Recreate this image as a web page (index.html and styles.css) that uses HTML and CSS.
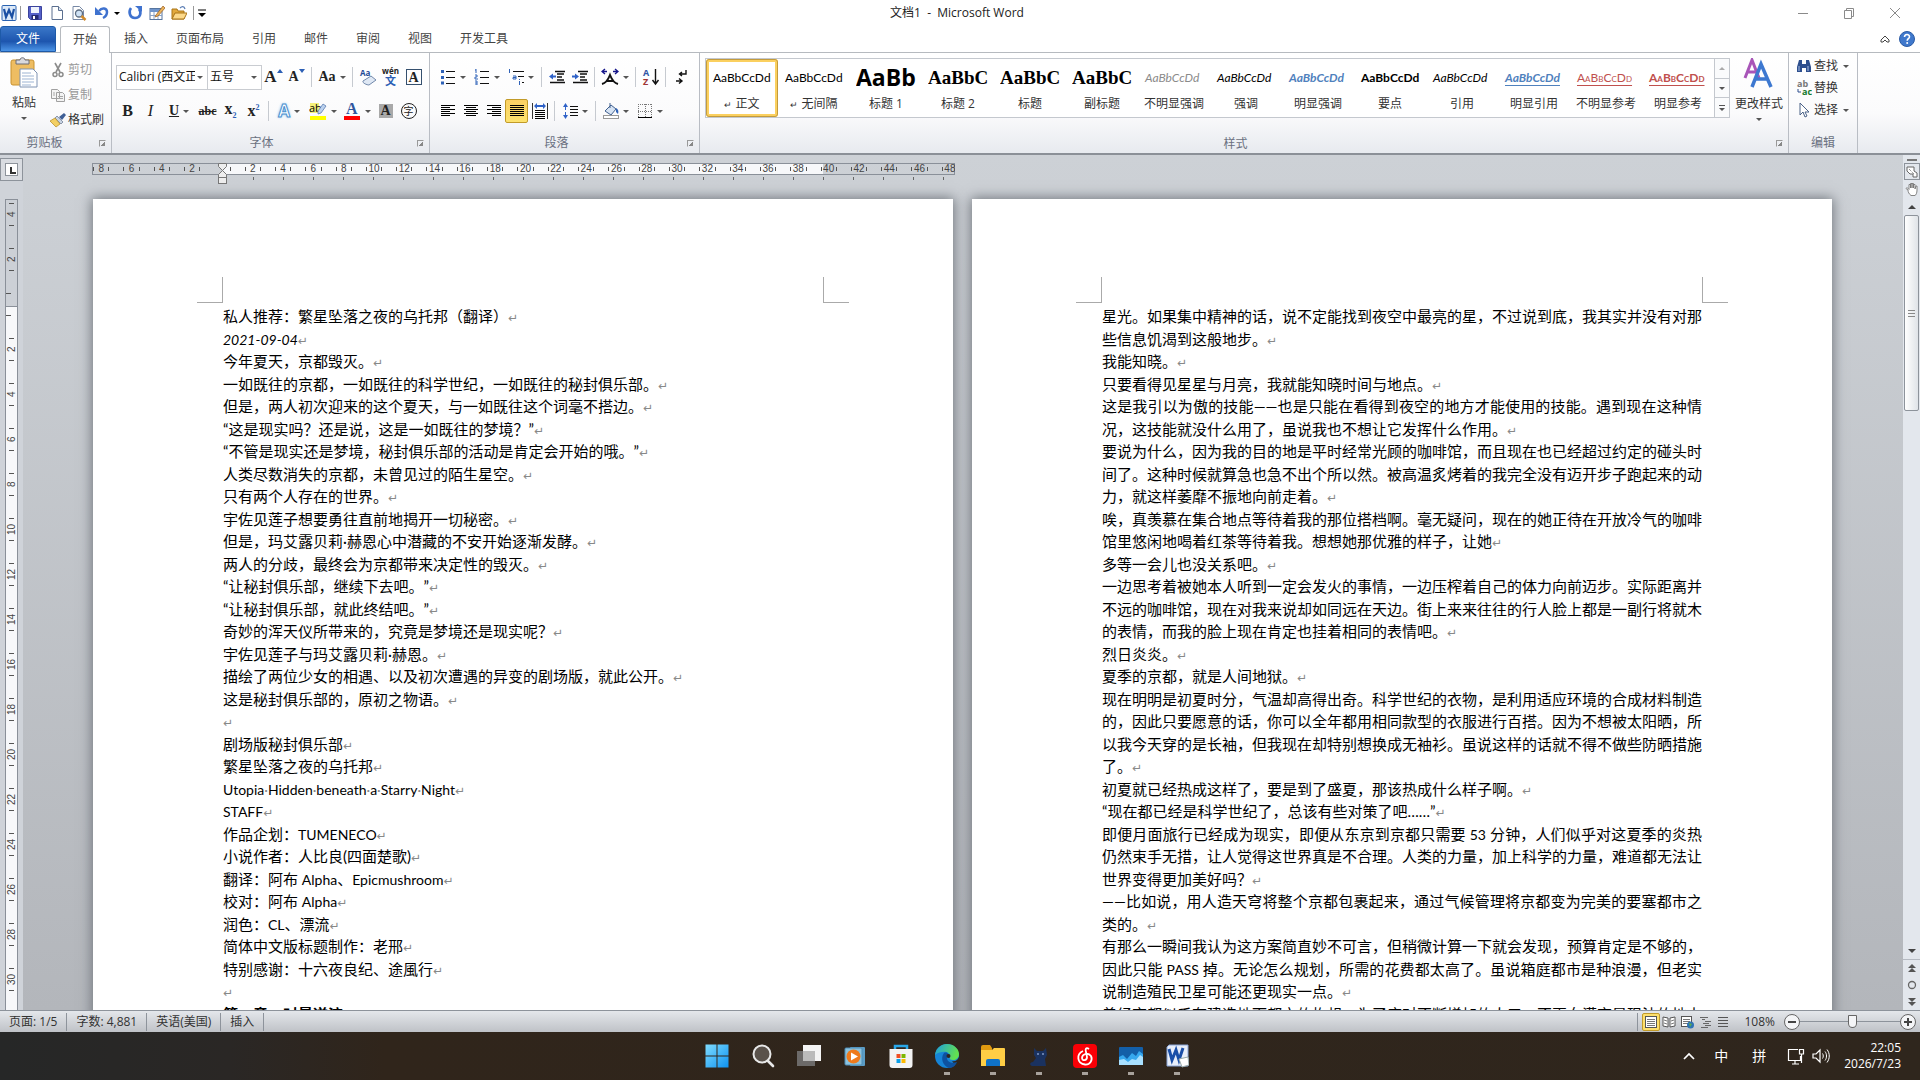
FILE: index.html
```html
<!DOCTYPE html>
<html lang="zh-CN">
<head>
<meta charset="utf-8">
<title>文档1 - Microsoft Word</title>
<link rel="stylesheet" href="styles.css">
</head>
<body>
<header class="titlebar">
  <div class="quick">
    <svg class="i16" viewBox="0 0 16 16"><rect x="1" y="0.500" width="14" height="15" rx="1" fill="#dce9f8" stroke="#2a62b0"/><path d="M3 4l2 8 3-7 3 7 2-8" fill="none" stroke="#1b4fa3" stroke-width="2.200"/></svg>
    <i class="qsep"></i>
    <button class="qb" aria-label="保存"><svg class="i16" viewBox="0 0 16 16"><path d="M1.500 1.500h13v13h-11l-2-2z" fill="#5560c8" stroke="#3b439c"/><rect x="4" y="2" width="8" height="6" fill="#eef2fc"/><rect x="4.500" y="10" width="7" height="4.500" fill="#23296f"/><rect x="6" y="11" width="2" height="3" fill="#fff"/></svg></button>
    <button class="qb" aria-label="新建"><svg class="i16" viewBox="0 0 16 16"><path d="M3 1.500h6.500l4 4v9H3z" fill="#fff" stroke="#5b6f8f"/><path d="M9.500 1.500v4h4" fill="#dbe5f2" stroke="#5b6f8f"/></svg></button>
    <button class="qb" aria-label="打印预览"><svg class="i16" viewBox="0 0 16 16"><path d="M2 1.500h6.500l4 4v9H2z" fill="#fff" stroke="#7788a5"/><circle cx="8" cy="8.500" r="3.500" fill="#cfe2f5" stroke="#5b6b80" stroke-width="1.300"/><path d="M10.500 11l4 4" stroke="#d08a2c" stroke-width="2.500"/></svg></button>
    <button class="qb arrow" aria-label="撤消"><svg class="i16" viewBox="0 0 16 16"><path d="M5 6c3-4 8-3 8 1 0 3-2 5-4 6" fill="none" stroke="#3f72cf" stroke-width="2.500"/><path d="M1 2v8h8z" fill="#3f72cf"/></svg></button>
    <button class="qb" aria-label="重复"><svg class="i16" viewBox="0 0 16 16"><path d="M4 3c-3 4-1 10 4 10s7-5 4-9" fill="none" stroke="#3f72cf" stroke-width="2.600"/><path d="M8 1h7v6z" fill="#3f72cf"/></svg></button>
    <button class="qb" aria-label="绘制表格"><svg class="i16" viewBox="0 0 16 16"><rect x="1" y="3.500" width="12" height="11" fill="#fff" stroke="#56759f"/><path d="M1 4h12v3H1z" fill="#6f95cc"/><path d="M1 10.500h12M5 7v7M9 7v7" stroke="#8aa3c5"/><path d="M7 10l7-9 2 2-7 8-3 1z" fill="#e9b25a" stroke="#9a5c20" stroke-width="0.700"/></svg></button>
    <button class="qb" aria-label="打开"><svg class="i16" viewBox="0 0 16 16"><path d="M1 14V4h5l1 2h6v8z" fill="#e2a93c" stroke="#a97416"/><path d="M1 14l3-6h12l-3 6z" fill="#fcd98a" stroke="#a97416"/><path d="M9 3c2-2 4-2 5 1" fill="none" stroke="#5d7fb5" stroke-width="1.300"/></svg></button>
    <i class="qsep"></i>
    <button class="qb cust" aria-label="自定义快速访问工具栏"><svg class="i10" viewBox="0 0 10 10"><path d="M1 2h8" stroke="#000"/><path d="M1 5h8L5 9z" fill="#000"/></svg></button>
  </div>
  <h1 class="title">文档1&nbsp; - &nbsp;Microsoft Word</h1>
  <div class="winctl">
    <button aria-label="最小化"><svg class="i12" viewBox="0 0 12 12"><path d="M1 6.500h10" stroke="#8a8a8a"/></svg></button>
    <button aria-label="还原"><svg class="i12" viewBox="0 0 12 12"><path d="M1.500 3.500h7v8h-7zM3.500 3V1.500h7v8H9" fill="none" stroke="#8a8a8a"/></svg></button>
    <button aria-label="关闭"><svg class="i12" viewBox="0 0 12 12"><path d="M1 1l10 10M11 1L1 11" stroke="#8a8a8a"/></svg></button>
  </div>
</header>
<nav class="tabs">
  <button class="file">文件</button><button class="on">开始</button><button>插入</button><button>页面布局</button><button>引用</button><button>邮件</button><button>审阅</button><button>视图</button><button>开发工具</button>
  <span class="grow"></span>
  <button class="tiny" aria-label="功能区最小化"><svg class="i10" viewBox="0 0 10 10"><path d="M1 6l4-4 4 4v2H7L5 6 3 8H1z" fill="#fff" stroke="#444"/></svg></button>
  <button class="tiny" aria-label="帮助"><svg class="i16" viewBox="0 0 16 16"><circle cx="8" cy="8" r="7.500" fill="#3f78cc" stroke="#2b5ba5"/><path d="M5.500 6c0-3.300 5-3.300 5-.3 0 2-2.300 2-2.300 4" fill="none" stroke="#fff" stroke-width="1.600"/><circle cx="8.200" cy="12" r="1" fill="#fff"/></svg></button>
</nav>
<section class="ribbon">
  <div class="group g-clip">
    <div class="clip">
      <button class="big"><svg class="i32" viewBox="0 0 32 32"><rect x="3" y="3" width="23" height="25" rx="2" fill="#eebd62" stroke="#c8922f"/><path d="M8 3h4c0-3 5-3 5 0h4v4H8z" fill="#d9d9de" stroke="#6d6d75"/><path d="M12 12h13l4 4v14H12z" fill="#fff" stroke="#7e93b3"/><path d="M14 16h9M14 19h12M14 22h12M14 25h12M14 28h9" stroke="#9db4d3"/></svg><span>粘贴</span></button>
      <div class="col">
        <button class="sm off"><svg class="i16" viewBox="0 0 16 16"><path d="M5 1l5 9M11 1L6 10" stroke="#8c8c8c" stroke-width="1.600"/><circle cx="5" cy="12.500" r="2" fill="none" stroke="#8c8c8c" stroke-width="1.500"/><circle cx="11" cy="12.500" r="2" fill="none" stroke="#8c8c8c" stroke-width="1.500"/></svg>剪切</button>
        <button class="sm off"><svg class="i16" viewBox="0 0 16 16"><path d="M1.500 2.500h6l2 2v7h-8zM6.500 5.500h6l2 2v7h-8z" fill="#f4f4f4" stroke="#a0a0a0"/><path d="M8 9.500h5M8 11.500h5M3 6h2M3 8h2" stroke="#a8a8a8"/></svg>复制</button>
        <button class="sm"><svg class="i16" viewBox="0 0 16 16"><path d="M9 5l5-4 2 2-4 5z" fill="#3f5f96"/><path d="M7 4l6 6-2 2-6-6z" fill="#c9d4e4" stroke="#66748c" stroke-width="0.700"/><path d="M5 6l5 6-4 3-6-6z" fill="#f3cf62" stroke="#b28a24" stroke-width="0.700"/></svg>格式刷</button>
      </div>
    </div>
    <footer><span>剪贴板</span><i class="launch"></i></footer>
  </div>
  <div class="group g-font">
    <div class="row">
      <label class="combo w1"><select aria-label="字体"><option>Calibri (西文正文)</option></select></label><label class="combo w2"><select aria-label="字号"><option>五号</option></select></label>
      <button class="ib"><b class="se f17">A</b><svg class="tri" viewBox="0 0 6 10"><path d="M0 4l3-4 3 4z" fill="#2c5fb5"/></svg></button>
      <button class="ib"><b class="se f14">A</b><svg class="tri" viewBox="0 0 6 10"><path d="M0 0h6L3 4z" fill="#2c5fb5"/></svg></button>
      <i class="sep"></i>
      <button class="ib dd"><b class="se f14">Aa</b></button>
      <i class="sep"></i>
      <button class="ib" aria-label="清除格式"><svg class="i18" viewBox="0 0 18 18"><text x="1" y="8" font-size="8" font-weight="700" fill="#1f4b96">Aa</text><path d="M4 13l8-5 5 4-7 5c-2 0-7-2-6-4z" fill="#dfe8f4" stroke="#7289ab"/></svg></button>
      <button class="ib phon"><small>wén</small><b>文</b></button>
      <button class="ib"><b class="se f14 boxed">A</b></button>
    </div>
    <div class="row">
      <button class="ib"><b class="se f16">B</b></button>
      <button class="ib"><i class="se f16">I</i></button>
      <button class="ib dd"><b class="se f14 un">U</b></button>
      <button class="ib"><s class="se f12 bold">abc</s></button>
      <button class="ib"><b class="se f16">x<sub>2</sub></b></button>
      <button class="ib"><b class="se f16">x<sup>2</sup></b></button>
      <i class="sep"></i>
      <button class="ib dd"><b class="glow">A</b></button>
      <button class="ib dd" aria-label="突出显示"><svg class="i18" viewBox="0 0 18 18"><rect x="1" y="1" width="9" height="10" fill="#f5f07a"/><text x="0" y="10" font-size="11" fill="#000">ab</text><path d="M9 9l5-7 3 2-5 7-3 1z" fill="#bcd2ee" stroke="#4a6ea8" stroke-width="0.700"/><rect x="1" y="14" width="16" height="4" fill="#ff0"/></svg></button>
      <button class="ib dd" aria-label="字体颜色"><svg class="i18" viewBox="0 0 18 18"><text class="se" x="3" y="12" font-size="16" font-weight="700" fill="#2f569e">A</text><rect x="1" y="14" width="16" height="4" fill="red"/></svg></button>
      <button class="ib"><b class="se f14 shade">A</b></button>
      <button class="ib"><span class="circ">字</span></button>
    </div>
    <footer><span>字体</span><i class="launch"></i></footer>
  </div>
  <div class="group g-para">
    <div class="row">
      <button class="ib dd" aria-label="项目符号"><svg class="i16" viewBox="0 0 16 16"><path d="M1 2.500h3M1 8.500h3M1 14h3" stroke="#2f62b8" stroke-width="3"/><path d="M6 2.500h9M6 8.500h9M6 14.500h9" stroke="#111"/></svg></button>
      <button class="ib dd" aria-label="编号"><svg class="i16" viewBox="0 0 16 16"><path d="M2 0v4M1 1h1M1 6h2v2H1v2h3M1 12h2v4H1M1 14h2" fill="none" stroke="#2f62b8"/><path d="M6 2.500h9M6 8.500h9M6 14.500h9" stroke="#111"/></svg></button>
      <button class="ib dd" aria-label="多级列表"><svg class="i16" viewBox="0 0 16 16"><path d="M1.500 0v4M5 7h3v3H5V8.500h3M11.500 10v1M11.500 12v4" fill="none" stroke="#2f62b8"/><path d="M5 2.500h11M10 7.500h6M14 13.500h2" stroke="#111"/></svg></button>
      <i class="sep"></i>
      <button class="ib" aria-label="减少缩进"><svg class="i16" viewBox="0 0 16 16"><path d="M6 2.500h10M8 5h7M8 8h5M8 11h7M1 13.500h15" stroke="#111" stroke-width="1.500"/><path d="M0 7.500l4-3v2h3v2H4v2z" fill="#2f62c8"/></svg></button>
      <button class="ib" aria-label="增加缩进"><svg class="i16" viewBox="0 0 16 16"><path d="M6 2.500h10M8 5h7M8 8h5M8 11h7M1 13.500h15" stroke="#111" stroke-width="1.500"/><path d="M7 7.500l-4-3v2H0v2h3v2z" fill="#2f62c8"/></svg></button>
      <i class="sep"></i>
      <button class="ib dd" aria-label="中文版式"><svg class="i18" viewBox="0 0 18 18"><path d="M1 16c4-1 6-4 8-9 2 5 4 8 8 9M6 13h6" fill="none" stroke="#111" stroke-width="2"/><path d="M1 3.500h5M4 1L1 3.500 4 6M12 3.500h5M14 1l3 2.500L14 6" fill="none" stroke="#16168a" stroke-width="1.400"/></svg></button>
      <i class="sep"></i>
      <button class="ib" aria-label="排序"><svg class="i18" viewBox="0 0 18 18"><text x="1" y="8" font-size="9" font-weight="700" fill="#2f55a4">A</text><text x="1" y="17" font-size="9" font-weight="700" fill="#a03535">Z</text><path d="M13.500 1v14M10.500 12l3 4 3-4" fill="none" stroke="#111" stroke-width="1.400"/></svg></button>
      <i class="sep"></i>
      <button class="ib" aria-label="显示编辑标记"><svg class="i16" viewBox="0 0 16 16"><path d="M13 1v4H7M9 3L6.500 5 9 7M3 12h6M6 9.500L9 12l-3 2.500" fill="none" stroke="#111" stroke-width="1.400"/></svg></button>
    </div>
    <div class="row">
      <button class="ib" aria-label="左对齐"><svg class="i16" viewBox="0 0 16 16"><path d="M1 2.500h14M1 4.500h9M1 6.500h14M1 8.500h9M1 10.500h14M1 12.500h9" stroke="#000"/></svg></button>
      <button class="ib" aria-label="居中"><svg class="i16" viewBox="0 0 16 16"><path d="M1 2.500h14M3 4.500h10M1 6.500h14M3 8.500h10M1 10.500h14M3 12.500h10" stroke="#000"/></svg></button>
      <button class="ib" aria-label="右对齐"><svg class="i16" viewBox="0 0 16 16"><path d="M1 2.500h14M6 4.500h9M1 6.500h14M6 8.500h9M1 10.500h14M6 12.500h9" stroke="#000"/></svg></button>
      <button class="ib hot" aria-label="两端对齐"><svg class="i16" viewBox="0 0 16 16"><path d="M1 2.500h14M1 4.500h14M1 6.500h14M1 8.500h14M1 10.500h14M1 12.500h14" stroke="#000"/></svg></button>
      <button class="ib" aria-label="分散对齐"><svg class="i16" viewBox="0 0 16 16"><path d="M.5 0v16M15.500 0v16" stroke="#333"/><path d="M3 7.500h10M3 9.500h10M3 11.500h10M3 13.500h10M3 15.500h10" stroke="#000"/><path d="M2 3l3-3v2h6V0l3 3-3 3V4H5v2z" fill="#2f62c8"/></svg></button>
      <i class="sep"></i>
      <button class="ib dd" aria-label="行距"><svg class="i16" viewBox="0 0 16 16"><path d="M3.500 2v5M3.500 9v5" stroke="#2f62c8"/><path d="M1 4l2.500-4L6 4zM1 12l2.500 4L6 12z" fill="#2f62c8"/><path d="M8 3.500h8M8 6.500h8M8 9.500h8M8 12.500h8" stroke="#111"/></svg></button>
      <i class="sep"></i>
      <button class="ib dd" aria-label="底纹"><svg class="i16" viewBox="0 0 16 16"><path d="M2 8l6-6 5 4-5 6z" fill="#d6e3f3" stroke="#41608f"/><path d="M7 0v5" stroke="#41608f"/><path d="M13 5c2 1 3 3 2 6l-2-2z" fill="#2f62b8"/><rect x=".5" y="12.500" width="15" height="3" fill="#fff" stroke="#999"/></svg></button>
      <button class="ib dd" aria-label="框线"><svg class="i16" viewBox="0 0 16 16"><path d="M1 1.500h14M1 8.500h14M1.500 1v13M8.500 1v13M14.500 1v13" stroke="#777" stroke-dasharray="1 1"/><path d="M1 14.500h14" stroke="#000"/></svg></button>
    </div>
    <footer><span>段落</span><i class="launch"></i></footer>
  </div>
  <div class="group g-style">
    <div class="styles">
      <div class="gallery">
        <button class="st sel"><span class="sm1">AaBbCcDd</span><em><small>↵</small> 正文</em></button>
        <button class="st"><span class="sm1">AaBbCcDd</span><em><small>↵</small> 无间隔</em></button>
        <button class="st"><span class="h1">AaBb</span><em>标题 1</em></button>
        <button class="st"><span class="h2">AaBbC</span><em>标题 2</em></button>
        <button class="st"><span class="h2">AaBbC</span><em>标题</em></button>
        <button class="st"><span class="h2">AaBbC</span><em>副标题</em></button>
        <button class="st"><span class="sm1 it gray">AaBbCcDd</span><em>不明显强调</em></button>
        <button class="st"><span class="sm1 it">AaBbCcDd</span><em>强调</em></button>
        <button class="st"><span class="sm1 it bd blue">AaBbCcDd</span><em>明显强调</em></button>
        <button class="st"><span class="sm1 bd">AaBbCcDd</span><em>要点</em></button>
        <button class="st"><span class="sm1 it">AaBbCcDd</span><em>引用</em></button>
        <button class="st"><span class="sm1 it bd blue ul">AaBbCcDd</span><em>明显引用</em></button>
        <button class="st"><span class="sm1 caps red ul">AaBbCcDd</span><em>不明显参考</em></button>
        <button class="st"><span class="sm1 caps bd red ul">AaBbCcDd</span><em>明显参考</em></button>
        <div class="gscroll"><button aria-label="上一行"><i class="up"></i></button><button aria-label="下一行"><i class="dn"></i></button><button aria-label="其他"><svg class="i10" viewBox="0 0 10 10"><path d="M2 2.500h6" stroke="#555"/><path d="M2 5h6L5 8z" fill="#555"/></svg></button></div>
      </div>
      <button class="big wide"><svg class="i32" viewBox="0 0 32 32"><path d="M2 20L9 2l7 18M4 14h10" fill="none" stroke="#a855b8" stroke-width="3"/><path d="M9 29l9-23 10 23M13 21h11" fill="none" stroke="#3d78d0" stroke-width="3.500"/></svg><span>更改样式</span></button>
    </div>
    <footer><span>样式</span><i class="launch"></i></footer>
  </div>
  <div class="group g-edit">
    <div class="col tight">
      <button class="sm arrow2"><svg class="i16" viewBox="0 0 16 16"><path d="M3 2h3v4h4V2h3l2 7v5h-5v-4H6v4H1V9z" fill="#2e4f8e"/><path d="M3 8v5M12 8v5" stroke="#a9c0e6"/></svg>查找</button>
      <button class="sm"><svg class="i16" viewBox="0 0 16 16"><text x="1" y="7" font-size="9" font-weight="700" fill="#777">ab</text><text x="6" y="15" font-size="9" font-weight="700" fill="#137a2c">ac</text><path d="M2 9v3h3" fill="none" stroke="#2e4f8e"/></svg>替换</button>
      <button class="sm arrow2"><svg class="i16" viewBox="0 0 16 16"><path d="M4 1v12l3-3 2 5 2-1-2-4h4z" fill="#fff" stroke="#4b6287"/></svg>选择</button>
    </div>
    <footer><span>编辑</span></footer>
  </div>
</section>
<main class="work">
  <aside class="left">
    <button class="tabsel" aria-label="制表符"><i></i></button>
    <div class="vruler"><div class="vtrack">
      <span>4</span><span>2</span><span></span><span>2</span><span>4</span><span>6</span><span>8</span><span>10</span><span>12</span><span>14</span><span>16</span><span>18</span><span>20</span><span>22</span><span>24</span><span>26</span><span>28</span><span>30</span>
    </div></div>
  </aside>
  <div class="desk">
    <div class="ruler"><div class="zone"></div><div class="track">
      <span>8</span><span>6</span><span>4</span><span>2</span><span class="mk"><svg viewBox="0 0 9 21"><path d="M.5.5h8v3l-4 4 4 4v3h-8v-3l4-4-4-4z" fill="#eee" stroke="#777"/><rect x=".5" y="14.500" width="8" height="6" fill="#eee" stroke="#777"/></svg></span><span>2</span><span>4</span><span>6</span><span>8</span><span>10</span><span>12</span><span>14</span><span>16</span><span>18</span><span>20</span><span>22</span><span>24</span><span>26</span><span>28</span><span>30</span><span>32</span><span>34</span><span>36</span><span>38</span><span>40</span><span>42</span><span>44</span><span>46</span><span>48</span>
    </div><div class="ticks"></div></div>
    <div class="pages">
      <article class="page">
        <div class="marks"><i></i><i></i></div>
        <p>私人推荐：繁星坠落之夜的乌托邦（翻译）</p>
        <p class="date"><span class="en">2021-09-04</span></p>
        <p>今年夏天，京都毁灭。</p>
        <p>一如既往的京都，一如既往的科学世纪，一如既往的秘封俱乐部。</p>
        <p>但是，两人初次迎来的这个夏天，与一如既往这个词毫不搭边。</p>
        <p>“这是现实吗？还是说，这是一如既往的梦境？”</p>
        <p>“不管是现实还是梦境，秘封俱乐部的活动是肯定会开始的哦。”</p>
        <p>人类尽数消失的京都，未曾见过的陌生星空。</p>
        <p>只有两个人存在的世界。</p>
        <p>宇佐见莲子想要勇往直前地揭开一切秘密。</p>
        <p>但是，玛艾露贝莉·赫恩心中潜藏的不安开始逐渐发酵。</p>
        <p>两人的分歧，最终会为京都带来决定性的毁灭。</p>
        <p>“让秘封俱乐部，继续下去吧。”</p>
        <p>“让秘封俱乐部，就此终结吧。”</p>
        <p>奇妙的浑天仪所带来的，究竟是梦境还是现实呢？</p>
        <p>宇佐见莲子与玛艾露贝莉·赫恩。</p>
        <p>描绘了两位少女的相遇、以及初次遭遇的异变的剧场版，就此公开。</p>
        <p>这是秘封俱乐部的，原初之物语。</p>
        <p></p>
        <p>剧场版秘封俱乐部</p>
        <p>繁星坠落之夜的乌托邦</p>
        <p><span class="en">Utopia<u>·</u>Hidden<u>·</u>beneath<u>·</u>a<u>·</u>Starry<u>·</u>Night</span></p>
        <p><span class="en">STAFF</span></p>
        <p>作品企划：<span class="en">TUMENECO</span></p>
        <p>小说作者：人比良(四面楚歌)</p>
        <p>翻译：阿布 <span class="en">Alpha</span>、<span class="en">Epicmushroom</span></p>
        <p>校对：阿布 <span class="en">Alpha</span></p>
        <p>润色：<span class="en">CL</span>、漂流</p>
        <p>简体中文版标题制作：老邢</p>
        <p>特别感谢：十六夜良纪、途風行</p>
        <p></p>
        <h2>第一章　时晷逆流</h2>
      </article>
      <article class="page">
        <div class="marks"><i></i><i></i></div>
        <p><span class="ln">星光。如果集中精神的话，说不定能找到夜空中最亮的星，不过说到底，我其实并没有对那</span>些信息饥渴到这般地步。</p>
        <p>我能知晓。</p>
        <p>只要看得见星星与月亮，我就能知晓时间与地点。</p>
        <p><span class="ln">这是我引以为傲的技能——也是只能在看得到夜空的地方才能使用的技能。遇到现在这种情</span>况，这技能就没什么用了，虽说我也不想让它发挥什么作用。</p>
        <p><span class="ln">要说为什么，因为我的目的地是平时经常光顾的咖啡馆，而且现在也已经超过约定的碰头时</span><span class="ln">间了。这种时候就算急也急不出个所以然。被高温炙烤着的我完全没有迈开步子跑起来的动</span>力，就这样萎靡不振地向前走着。</p>
        <p><span class="ln">唉，真羡慕在集合地点等待着我的那位搭档啊。毫无疑问，现在的她正待在开放冷气的咖啡</span>馆里悠闲地喝着红茶等待着我。想想她那优雅的样子，让她</p>
        <p>多等一会儿也没关系吧。</p>
        <p><span class="ln">一边思考着被她本人听到一定会发火的事情，一边压榨着自己的体力向前迈步。实际距离并</span><span class="ln">不远的咖啡馆，现在对我来说却如同远在天边。街上来来往往的行人脸上都是一副行将就木</span>的表情，而我的脸上现在肯定也挂着相同的表情吧。</p>
        <p>烈日炎炎。</p>
        <p>夏季的京都，就是人间地狱。</p>
        <p><span class="ln">现在明明是初夏时分，气温却高得出奇。科学世纪的衣物，是利用适应环境的合成材料制造</span><span class="ln">的，因此只要愿意的话，你可以全年都用相同款型的衣服进行百搭。因为不想被太阳晒，所</span><span class="ln">以我今天穿的是长袖，但我现在却特别想换成无袖衫。虽说这样的话就不得不做些防晒措施</span>了。</p>
        <p>初夏就已经热成这样了，要是到了盛夏，那该热成什么样子啊。</p>
        <p>“现在都已经是科学世纪了，总该有些对策了吧……”</p>
        <p><span class="ln">即便月面旅行已经成为现实，即便从东京到京都只需要 <span class="en">53</span> 分钟，人们似乎对这夏季的炎热</span><span class="ln">仍然束手无措，让人觉得这世界真是不合理。人类的力量，加上科学的力量，难道都无法让</span>世界变得更加美好吗？</p>
        <p><span class="ln">——比如说，用人造天穹将整个京都包裹起来，通过气候管理将京都变为完美的要塞都市之</span>类的。</p>
        <p><span class="ln">有那么一瞬间我认为这方案简直妙不可言，但稍微计算一下就会发现，预算肯定是不够的，</span><span class="ln">因此只能 <span class="en">PASS</span> 掉。无论怎么规划，所需的花费都太高了。虽说箱庭都市是种浪漫，但老实</span>说制造殖民卫星可能还更现实一点。</p>
        <p><span class="ln">曾经京都似乎有建造地下都市的构想，为了应对不断增加的人口，不再向满京是现法的地上</span></p>
      </article>
    </div>
  </div>
  <aside class="vscroll">
    <i class="split"></i>
    <button class="rt" aria-label="标尺"><svg class="i12" viewBox="0 0 12 12"><path d="M1 1h7v4l3 2v4H7V8H4L1 5z" fill="#fff" stroke="#666"/><path d="M3 3l5 5" stroke="#666" stroke-dasharray="1 1"/></svg></button>
    <button class="hand" aria-label="平移"><svg class="i14" viewBox="0 0 14 14"><path d="M3 8L1 6.500l1-1 2 2V2.500h1.500V6 1.500H7V6 1.500h1.500V6 2.500H10V7l1-3h1v4c0 3-1 5-2 5.500H6C4 12 3 10 3 8z" fill="#fff" stroke="#777" stroke-width="0.900"/></svg></button>
    <button class="arr" aria-label="向上滚动"><i class="up dark"></i></button>
    <div class="thumb"></div>
    <span class="grow"></span>
    <button class="arr" aria-label="向下滚动"><i class="dn dark"></i></button>
    <button class="arr top" aria-label="前一页"><svg class="i10" viewBox="0 0 10 10"><path d="M1 5l4-4 4 4zM1 9l4-4 4 4z" fill="#555"/></svg></button>
    <button class="arr" aria-label="选择浏览对象"><svg class="i10" viewBox="0 0 10 10"><circle cx="5" cy="5" r="3.500" fill="none" stroke="#666" stroke-width="1.300"/></svg></button>
    <button class="arr" aria-label="下一页"><svg class="i10" viewBox="0 0 10 10"><path d="M1 1l4 4 4-4zM1 5l4 4 4-4z" fill="#555"/></svg></button>
  </aside>
</main>
<footer class="status">
  <span class="cell">页面: 1/5</span><span class="cell">字数: 4,881</span><span class="cell">英语(美国)</span><span class="cell">插入</span>
  <span class="grow"></span>
  <div class="views">
    <button class="hotv" aria-label="页面视图"><svg class="i14" viewBox="0 0 14 14"><rect x="1.500" y="1.500" width="11" height="11" fill="#fff" stroke="#555"/><path d="M3 4.500h8M3 6.500h8M3 8.500h8M3 10.500h8" stroke="#777"/></svg></button>
    <button aria-label="阅读版式"><svg class="i14" viewBox="0 0 14 14"><path d="M1 2l5 1v9l-5-1zM13 2L8 3v9l5-1z" fill="#fff" stroke="#555"/><path d="M2 5l3 1M2 8l3 1M12 5L9 6M12 8L9 9" stroke="#777"/></svg></button>
    <button aria-label="Web版式"><svg class="i14" viewBox="0 0 14 14"><rect x="1.500" y="1.500" width="10" height="10" fill="#fff" stroke="#555"/><path d="M3 4.500h7M3 6.500h7M3 8.500h5" stroke="#777"/><circle cx="10.500" cy="10" r="3.500" fill="#2f74b5"/><path d="M9 8l3 1-2 3z" fill="#5cae4c"/></svg></button>
    <button aria-label="大纲视图"><svg class="i14" viewBox="0 0 14 14"><path d="M2 2.500h8M4 4.500h3M7 6.500h6M5 8.500h6M7 10.500h6M3 12.500h7" stroke="#666"/></svg></button>
    <button aria-label="草稿"><svg class="i14" viewBox="0 0 14 14"><path d="M2 2.500h10M2 5.500h10M2 8.500h10M2 11.500h10" stroke="#555"/></svg></button>
  </div>
  <span class="pct">108%</span>
  <button class="round" aria-label="缩小"><svg class="i10" viewBox="0 0 10 10"><path d="M1 5h8" stroke="#444" stroke-width="2"/></svg></button>
  <input class="zoom" type="range" min="10" max="190" value="104" aria-label="显示比例">
  <button class="round" aria-label="放大"><svg class="i10" viewBox="0 0 10 10"><path d="M1 5h8M5 1v8" stroke="#444" stroke-width="2"/></svg></button>
</footer>
<div class="taskbar">
  <span></span>
  <div class="apps">
    <button aria-label="开始"><svg class="i24" viewBox="0 0 24 24"><defs><linearGradient id="w" x1="0" y1="0" x2="1" y2="1"><stop offset="0" stop-color="#7fdcff"/><stop offset="1" stop-color="#0e92f0"/></linearGradient></defs><path d="M0.500 0.500H11.500V11.500H.5zM12.500.5h11v11h-11zM.5 12.500h11v11H.5zM12.500 12.500h11v11h-11z" fill="url(#w)"/></svg></button>
    <button aria-label="搜索"><svg class="i24" viewBox="0 0 24 24"><circle cx="11" cy="10" r="8.500" fill="#5a524b" stroke="#e8e8e8" stroke-width="2"/><path d="M17 17l5 5" stroke="#e8e8e8" stroke-width="2.600" stroke-linecap="round"/></svg></button>
    <button aria-label="任务视图"><svg class="i24" viewBox="0 0 24 24"><rect x="6" y="1" width="18" height="16" fill="#f4f4f4"/><rect x="0" y="7" width="18" height="15" fill="#777" fill-opacity=".85"/><rect x="6" y="7" width="12" height="10" fill="#bbb"/></svg></button>
    <button aria-label="媒体播放器"><svg class="i24" viewBox="0 0 24 24"><rect x="7" y="3" width="15" height="19" rx="1" fill="#5b9cc4"/><rect x="2" y="4" width="17" height="17" rx="1" fill="#8cc3de" stroke="#4d8db8"/><circle cx="10.500" cy="12.500" r="7" fill="#ee7a1c"/><path d="M8 8.500v8l7-4z" fill="#fff"/></svg></button>
    <button aria-label="应用商店"><svg class="i24" viewBox="0 0 24 24"><path d="M6 7V2h12v5" fill="none" stroke="#29a7e8" stroke-width="2.500"/><path d="M.5 5h23v16a3 3 0 0 1-3 3h-17a3 3 0 0 1-3-3z" fill="#f3f3f3"/><path d="M7.500 10h4v4h-4z" fill="#f04e23"/><path d="M12.500 10h4v4h-4z" fill="#7db700"/><path d="M7.500 15h4v4h-4z" fill="#0a9fe8"/><path d="M12.500 15h4v4h-4z" fill="#fdb900"/></svg></button>
    <button class="run" aria-label="Edge"><svg class="i24" viewBox="0 0 24 24"><defs><linearGradient id="e" x1="0" y1="0" x2="1" y2=".3"><stop offset="0" stop-color="#1b9de2"/><stop offset="1" stop-color="#63e04f"/></linearGradient></defs><circle cx="12" cy="12" r="12" fill="#1684d6"/><path d="M0 11C1 4 6 0 12 0c7 0 12 5 12 10 0 4-3 6-6 6s-4-1-3-3c1-4-4-6-8-5-4 .5-6 2-7 3z" fill="url(#e)"/><path d="M17 17c3 1 6-1 7-4v8h-4z" fill="#30261d"/><path d="M9 9c-4 5-1 13 5 15 4 0 7-3 8-6-5 2-10 0-10-4 0-2 1-3 1-4s-2-2-4-1z" fill="#0d52a0"/><circle cx="13.500" cy="12" r="2" fill="#30261d"/></svg></button>
    <button class="run" aria-label="文件资源管理器"><svg class="i24" viewBox="0 0 24 24"><path d="M0 3a2 2 0 0 1 2-2h7l2 3v5H0z" fill="#e09a10"/><path d="M0 6h11l2-2h10a1 1 0 0 1 1 1v17H0z" fill="#ffce45"/><path d="M5 22v-5a2 2 0 0 1 2-2h10a2 2 0 0 1 2 2v5z" fill="#0f72c8"/></svg></button>
    <button class="run" aria-label="猫"><svg class="i24" viewBox="0 0 24 24"><path d="M7 4l3 3h6l3-3 1 7-2 4 1 7H5c-3-1-2-4 1-4l3-4-2-3z" fill="#1a3260"/><path d="M10 10h2M15 10h2" stroke="#7f97c4" stroke-width="1.500"/></svg></button>
    <button class="run" aria-label="网易云音乐"><svg class="i24" viewBox="0 0 24 24"><rect width="24" height="24" rx="4" fill="#f90006"/><path d="M16 5c-3-2-4 0-3 3l1 5c0 4-5 4-5 1 0-4 6-6 9-2 2 4-1 9-6 8.500C4 20 3 10 10 7" fill="none" stroke="#fff" stroke-width="1.800"/></svg></button>
    <button class="run" aria-label="任务管理器"><svg class="i24" viewBox="0 0 24 24"><rect y="3" width="24" height="18" rx="1" fill="#135fa8"/><path d="M0 13l4-2 4 4 5-6 4 3 3-5 4 3v11H0z" fill="#36a8ee"/><path d="M0 16l5-1 4 3 4-3 4 1 4-5 3 2v8H0z" fill="#a9e0ff"/></svg></button>
    <button class="run" aria-label="Word"><svg class="i24" viewBox="0 0 24 24"><path d="M4 1h19v21H2V3z" fill="#e8eefa" stroke="#8aa6d8"/><path d="M4 5l3 11 4-10 3 10 4-12" fill="none" stroke="#1a4fa8" stroke-width="3"/><path d="M14 15l9-2 1 8-7 2z" fill="#fff" stroke="#9aa"/></svg></button>
  </div>
  <div class="tray">
    <svg class="i14" viewBox="0 0 14 14"><path d="M2 10l5-5 5 5" fill="none" stroke="#fff" stroke-width="1.700"/></svg>
    <span class="ime">中</span><span class="ime">拼</span>
    <div class="net"><svg class="i18" viewBox="0 0 18 18"><path d="M11 2.500H1.500v11h12V9M5 17h7M8 14v3" fill="none" stroke="#fff" stroke-width="1.200"/><path d="M12.500 2.500h4V7h-4zM14.500 7v9" fill="none" stroke="#fff" stroke-width="1.200"/></svg><svg class="i18" viewBox="0 0 18 18"><path d="M1 7v4h3l4 4V3L4 7z" fill="none" stroke="#fff" stroke-width="1.200"/><path d="M10.500 6.500c1 1.500 1 3.500 0 5M13 4.500c2 2.500 2 6.500 0 9M15 2.500c3 4 3 9 0 13" fill="none" stroke="#fff"/></svg></div>
    <time class="clock">22:05<br>2026/7/23</time>
  </div>
</div>
</body>
</html>
```
FILE: styles.css
```css
* { box-sizing: border-box; }
body {
  margin: 0;
  height: 100vh;
  display: flex;
  flex-direction: column;
  overflow: hidden;
  background: #fff;
  color: #333;
  font: 12px/16px "Open Sans", "Noto Sans CJK SC", sans-serif;
}
button { border: 0; padding: 0; margin: 0; background: none; color: inherit; font: inherit; display: flex; align-items: center; justify-content: center; }
svg { display: block; flex: none; }
.grow { flex: 1; }
.i10 { width: 10px; height: 10px; }
.i12 { width: 12px; height: 12px; }
.i14 { width: 14px; height: 14px; }
.i16 { width: 16px; height: 16px; }
.i18 { width: 18px; height: 18px; }
.i24 { width: 24px; height: 24px; }
.i32 { width: 32px; height: 32px; }
.se { font-family: "Liberation Serif", serif; }
.f12 { font-size: 12px; }
.f14 { font-size: 14px; }
.f16 { font-size: 16px; }
.f17 { font-size: 17px; }
.bold { font-weight: 700; }

/* title bar */
.titlebar { display: grid; grid-template-columns: 1fr auto 1fr; align-items: center; height: 26px; flex: none; padding-right: 2px; }
.quick { display: flex; align-items: center; padding-left: 1px; }
.quick .qsep { width: 1px; height: 14px; margin: 0 3px; background: #999; }
.qb { width: 22px; height: 22px; }
.qb.arrow { width: 34px; gap: 4px; }
.qb.arrow::after { content: ""; border: 3px solid transparent; border-top-color: #000; border-bottom: 0; }
.qb.cust { width: 10px; }
.title { margin: 0 4px 0 0; font-size: 12px; font-weight: 400; color: #222; }
.winctl { display: flex; justify-content: flex-end; }
.winctl button { width: 46px; height: 26px; }

/* tabs */
.tabs { display: flex; height: 27px; flex: none; border-bottom: 1px solid #b6babf; color: #444; padding-right: 2px; }
.tabs button { padding: 0 14px; }
.tabs .file { width: 56px; margin-right: 4px; border-radius: 3px 3px 0 0; color: #fff; border: 1px solid #1e5aa8; background: linear-gradient(#3a77c8, #1d55ae 60%, #4b94e6); }
.tabs .on { width: 50px; padding: 0; border: 1px solid #b6babf; border-bottom: 0; border-radius: 3px 3px 0 0; background: #fff; height: 27px; }
.tabs .tiny { padding: 0; width: 22px; }

/* ribbon */
.ribbon { display: flex; height: 102px; flex: none; background: linear-gradient(#fff, #fbfbfc 60%, #e7eaef); border-bottom: 2px solid #8b9097; }
.group { display: flex; flex-direction: column; border-right: 1px solid #b9bdc4; }
.group footer { display: flex; align-items: center; height: 20px; margin-top: auto; color: #6a7080; }
.group footer span { flex: 1; text-align: center; }
.group footer span:not(:last-child) { padding-right: 10px; }
.launch { width: 7px; height: 7px; margin-right: 5px; border: 1px solid #999; border-right-color: transparent; border-bottom-color: transparent; background: linear-gradient(135deg, transparent 55%, #888 55%); }
.g-clip { width: 112px; }
.g-font { width: 318px; padding-left: 4px; padding-top: 12px; gap: 10px; }
.g-para { width: 270px; padding-left: 6px; padding-top: 12px; gap: 10px; }
.g-style { padding-left: 5px; }
.g-edit { width: 69px; }
.clip { display: flex; padding-top: 4px; }
.big { flex-direction: column; width: 48px; height: 76px; justify-content: flex-start; }
.big span { margin: 6px 0 6px; }
.big::after { content: ""; border: 3px solid transparent; border-top-color: #555; border-bottom: 0; }
.big.wide { width: 58px; }
.col { display: flex; flex-direction: column; }
.sm { height: 25px; gap: 2px; justify-content: flex-start; white-space: nowrap; padding-left: 2px; }
.off { color: #999; }
.tight { padding-top: 2px; padding-left: 5px; }
.tight .sm { height: 22px; }
.arrow2::after { content: ""; margin-left: 3px; border: 3px solid transparent; border-top-color: #555; border-bottom: 0; }
.row { display: flex; align-items: center; height: 24px; }
.ib { width: 23px; height: 24px; color: #222; flex: none; }
.ib.dd { width: 34px; gap: 4px; }
.ib.dd::after { content: ""; border: 3px solid transparent; border-top-color: #555; border-bottom: 0; }
.ib.hot { border: 1px solid #c29b29; border-radius: 2px; background: linear-gradient(#fbd063, #fde36e); }
.ib sub, .ib sup { font-size: 8px; line-height: 8px; color: #2c5fb5; }
.phon { flex-direction: column; }
.phon small { font-size: 8px; line-height: 8px; font-weight: 700; }
.phon b { font-size: 11px; line-height: 12px; color: #2c5fb5; }
.tri { width: 6px; height: 10px; align-self: flex-start; margin-top: 4px; }
.un { text-decoration: underline; }
.boxed { width: 16px; height: 16px; border: 1px solid #35506e; text-align: center; line-height: 15px; }
.shade { width: 14px; height: 14px; background: #a9a9a9; line-height: 14px; text-align: center; }
.glow { font-size: 17px; color: #fff; -webkit-text-stroke: 1px #4a90d0; text-shadow: 0 0 3px #5aa8e8; }
.circ { width: 16px; height: 16px; border: 1px solid #222; border-radius: 50%; font-size: 10px; line-height: 14px; text-align: center; }
.sep { width: 1px; height: 20px; margin: 0 3px; background: #c6cad0; }
.combo { display: flex; align-items: center; height: 25px; border: 1px solid #c9ccd1; background: #fff; padding-right: 4px; }
.combo + .combo { border-left: 0; }
.combo::after { content: ""; border: 3px solid transparent; border-top-color: #555; border-bottom: 0; }
.combo select { flex: 1; min-width: 0; appearance: none; border: 0; padding: 0 2px; background: none; color: #111; font: inherit; overflow: hidden; text-overflow: clip; }
.w1 { width: 92px; }
.w2 { width: 54px; }

.styles { display: flex; padding-top: 5px; }
.gallery { display: flex; height: 60px; border: 1px solid #c4c8ce; background: #fff; }
.st { width: 72px; flex-direction: column; overflow: hidden; padding: 0 6px; border-radius: 3px; }
.st span { width: 100%; height: 30px; line-height: 30px; overflow: hidden; white-space: nowrap; color: #000; text-align: left; }
.st em { font-style: normal; white-space: nowrap; line-height: 18px; margin-top: 2px; }
.st small { font-size: 9px; }
.st.sel { border: 3px solid #fbd05f; outline: 1px solid #c29b3d; outline-offset: -1px; padding: 0 3px; }
.st .sm1 { font-family: Lato, sans-serif; font-size: 12px; padding-left: 1px; }
.st .h1 { font: 700 23px/28px "Open Sans", sans-serif; }
.st .h2 { font: 700 19px/30px "Liberation Serif", serif; }
.st .it { font-style: italic; }
.st .bd { font-weight: 700; }
.st .gray { color: #8a8a8a; }
.st .blue { color: #4f81bd; }
.st .red { color: #c0504d; }
.st .caps { font-variant: small-caps; }
.st .ul { text-decoration: underline; text-underline-offset: 3px; }
.gscroll { display: flex; flex-direction: column; width: 15px; border-left: 1px solid #c4c8ce; }
.gscroll button { flex: 1; background: #fafbfc; }
.gscroll button + button { border-top: 1px solid #c4c8ce; }
.up { border: 3px solid transparent; border-bottom-color: #aaa; border-top: 0; }
.dn { border: 3px solid transparent; border-top-color: #555; border-bottom: 0; }
.dark.up { border-width: 4px; border-top: 0; border-bottom-color: #444; }
.dark.dn { border-width: 4px; border-bottom: 0; border-top-color: #444; }

/* workspace */
.work { flex: 1; min-height: 0; display: flex; overflow: hidden; background: linear-gradient(#cdd1d6, #b3b6bb); }
.left { width: 23px; flex: none; display: flex; flex-direction: column; overflow: hidden; padding-top: 3px; background: #cfd3d9; }
.tabsel { width: 23px; height: 23px; flex: none; border: 1px solid #8d939b; background: #d9dce1; margin-bottom: 18px; }
.tabsel i { width: 13px; height: 13px; border: 1px solid #8d939b; background: linear-gradient(#333, #333) 4px 3px / 2px 6px no-repeat, linear-gradient(#333, #333) 4px 8px / 6px 2px no-repeat, #fff; }
.vruler { flex: 1; min-height: 0; width: 13px; margin-left: 5px; border: 1px solid #8a9099; border-bottom: 0; overflow: hidden; background: linear-gradient(#ccd0d6 106px, #8a9099 106px, #8a9099 107px, #f7f8fa 107px); }
.vtrack { margin-top: -8px; }
.vtrack span { height: 45px; display: flex; align-items: center; justify-content: space-between; padding: 11px 0; writing-mode: vertical-rl; transform: rotate(180deg); font: 10px/11px "Liberation Sans", sans-serif; color: #444; }
.vtrack span::before, .vtrack span::after { content: ""; width: 5px; height: 1px; background: #555; }

.desk { flex: 1; min-width: 0; overflow: hidden; padding-left: 69px; }
.ruler { width: 863px; height: 23px; margin-top: 8px; overflow: hidden; display: grid; grid-template-rows: 12px 9px; }
.zone { grid-area: 1 / 1; border: 1px solid #8a9099; background: linear-gradient(90deg, transparent 130px, #f7f8fa 130px, #f7f8fa 730px, transparent 730px); }
.track { grid-area: 1 / 1; display: flex; margin: 0 -10px 0 -6px; }
.track span { flex: 1; display: flex; align-items: center; justify-content: space-between; padding: 0 7px; font: 10px/12px "Liberation Sans", sans-serif; color: #444; }
.track span::before, .track span::after { content: ""; width: 1px; height: 4px; background: #555; }
.track .mk svg { width: 9px; height: 21px; align-self: flex-start; }
.track .mk::before { visibility: hidden; }
.ticks { grid-row: 2; height: 3px; margin: 2px 0 0 161px; background: repeating-linear-gradient(90deg, #666 0, #666 1px, transparent 1px, transparent 30px); }
.pages { display: flex; gap: 19px; padding: 13px 0 0 1px; }
.page {
  width: 860px;
  flex: none;
  height: 1200px;
  padding: 78px 130px 0;
  background: #fff;
  box-shadow: 0 0 12px 1px #6f747b;
  color: #000;
  font: 15px/1.5 Lato, "Noto Sans CJK SC", sans-serif;
  text-spacing-trim: space-all;
}
.marks { display: flex; justify-content: space-between; height: 28px; margin: 0 -26px; }
.marks i { width: 26px; height: 26px; border-bottom: 1px solid #aaa; }
.marks i:first-child { border-right: 1px solid #aaa; }
.marks i:last-child { border-left: 1px solid #aaa; }
.page p { margin: 0; white-space: nowrap; }
.page p::after { content: "↵"; font: 12px/12px "DejaVu Sans", sans-serif; color: #888; }
.page .en { font-size: 14px; }
.page u { text-decoration: none; color: #888; }
.date { font-style: italic; }
.ln { display: block; text-align: justify; text-align-last: justify; }
.page h2 { margin: 0; font-size: 15px; line-height: 1.5; }

.vscroll { width: 17px; flex: none; display: flex; flex-direction: column; align-items: center; padding-top: 4px; background: #e3e7ed; }
.split { width: 10px; height: 2px; background: #777; margin-bottom: 2px; }
.rt { width: 16px; height: 17px; border: 1px solid #8d939b; }
.hand { width: 16px; height: 18px; }
.arr { width: 17px; height: 17px; flex: none; }
.arr.top { border-top: 1px solid #b5bac2; }
.thumb { width: 15px; height: 196px; border: 1px solid #8d939b; border-radius: 2px; background: linear-gradient(90deg, #fff, #dfe3e8); display: flex; align-items: center; justify-content: center; }
.thumb::after { content: ""; width: 7px; height: 7px; background: repeating-linear-gradient(#888 0, #888 1px, transparent 1px, transparent 3px); }

/* status bar */
.status { flex: none; display: flex; align-items: center; height: 22px; border-top: 1px solid #8d939b; background: linear-gradient(#e4e7eb, #bfc2c7); padding-right: 4px; }
.cell { padding: 0 9px; border-right: 1px solid #8d939b; line-height: 18px; }
.views { display: flex; align-items: center; border-left: 1px solid #8d939b; padding-left: 4px; }
.views button { width: 18px; height: 18px; }
.views .hotv { border: 1px solid #c29b29; border-radius: 2px; background: #fddf6d; }
.pct { margin: 0 9px 0 12px; }
.round { width: 16px; height: 16px; border: 1px solid #666; border-radius: 50%; background: #f4f5f7; }
.zoom { appearance: none; width: 100px; height: 14px; margin: 0; background: linear-gradient(#8d939b, #8d939b) center / 100% 1px no-repeat; }
.zoom::-webkit-slider-thumb { appearance: none; width: 9px; height: 13px; border: 1px solid #666; border-radius: 1px 1px 5px 5px; background: #f4f5f7; }

/* taskbar */
.taskbar { flex: none; height: 48px; display: grid; grid-template-columns: 1fr auto 1fr; align-items: center; padding-right: 19px; background: linear-gradient(90deg, #262727, #2a2725 12%, #30251b 20%, #2f261d); color: #fff; }
.apps { display: flex; padding-right: 7px; }
.apps button { width: 46px; height: 48px; }
.apps .run { background: linear-gradient(#a8a29c, #a8a29c) center 40px / 6px 3px no-repeat; }
.tray { display: flex; align-items: center; justify-content: flex-end; }
.ime { font-size: 14px; line-height: 20px; width: 38px; text-align: center; }
.tray .i14 { margin-right: 6px; }
.net { display: flex; gap: 7px; margin: 0 14px 0 9px; }
.clock { text-align: right; line-height: 16px; font-size: 12px; }
```
